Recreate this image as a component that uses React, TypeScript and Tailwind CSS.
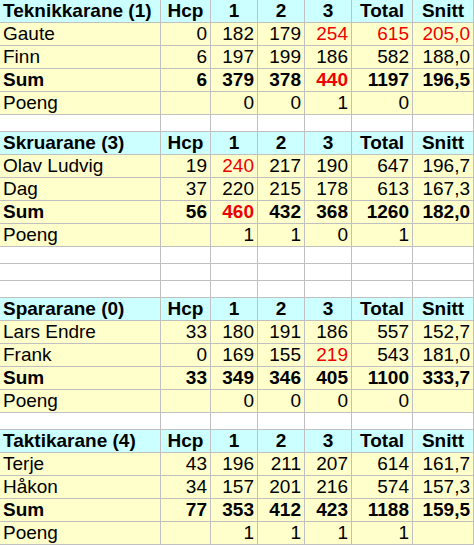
import React from "react";

type Cell = string | { v: string; red?: boolean };

type Section = {
  title: string;
  rows: { name: string; cells: Cell[]; bold?: boolean }[];
  gapAfter: number;
};

const r = (v: string) => ({ v, red: true });

const sections: Section[] = [
  {
    title: "Teknikkarane (1)",
    rows: [
      { name: "Gaute", cells: ["0", "182", "179", r("254"), r("615"), r("205,0")] },
      { name: "Finn", cells: ["6", "197", "199", "186", "582", "188,0"] },
      { name: "Sum", bold: true, cells: ["6", "379", "378", r("440"), "1197", "196,5"] },
      { name: "Poeng", cells: ["", "0", "0", "1", "0", ""] },
    ],
    gapAfter: 1,
  },
  {
    title: "Skruarane (3)",
    rows: [
      { name: "Olav Ludvig", cells: ["19", r("240"), "217", "190", "647", "196,7"] },
      { name: "Dag", cells: ["37", "220", "215", "178", "613", "167,3"] },
      { name: "Sum", bold: true, cells: ["56", r("460"), "432", "368", "1260", "182,0"] },
      { name: "Poeng", cells: ["", "1", "1", "0", "1", ""] },
    ],
    gapAfter: 3,
  },
  {
    title: "Spararane (0)",
    rows: [
      { name: "Lars Endre", cells: ["33", "180", "191", "186", "557", "152,7"] },
      { name: "Frank", cells: ["0", "169", "155", r("219"), "543", "181,0"] },
      { name: "Sum", bold: true, cells: ["33", "349", "346", "405", "1100", "333,7"] },
      { name: "Poeng", cells: ["", "0", "0", "0", "0", ""] },
    ],
    gapAfter: 1,
  },
  {
    title: "Taktikarane (4)",
    rows: [
      { name: "Terje", cells: ["43", "196", "211", "207", "614", "161,7"] },
      { name: "Håkon", cells: ["34", "157", "201", "216", "574", "157,3"] },
      { name: "Sum", bold: true, cells: ["77", "353", "412", "423", "1188", "159,5"] },
      { name: "Poeng", cells: ["", "1", "1", "1", "1", ""] },
    ],
    gapAfter: 0,
  },
];

const headers = ["Hcp", "1", "2", "3", "Total", "Snitt"];

const base =
  "border-r border-b border-[#c0c0c0] h-[23px] leading-[22px] px-[3px] whitespace-nowrap overflow-hidden";

export default function App() {
  const cells: React.ReactNode[] = [];
  sections.forEach((s, si) => {
    cells.push(
      <div key={`h${si}`} className={`${base} bg-[#ccffff] font-bold text-left`}>
        {s.title}
      </div>
    );
    headers.forEach((h, hi) =>
      cells.push(
        <div key={`h${si}-${hi}`} className={`${base} bg-[#ccffff] font-bold text-center`}>
          {h}
        </div>
      )
    );
    s.rows.forEach((row, ri) => {
      cells.push(
        <div
          key={`r${si}-${ri}`}
          className={`${base} bg-[#ffffcc] text-left ${row.bold ? "font-bold" : ""}`}
        >
          {row.name}
        </div>
      );
      row.cells.forEach((c, ci) => {
        const v = typeof c === "string" ? c : c.v;
        const red = typeof c !== "string" && c.red;
        cells.push(
          <div
            key={`r${si}-${ri}-${ci}`}
            className={`${base} bg-[#ffffcc] text-right ${row.bold ? "font-bold" : ""} ${
              red ? "text-[#ee0000]" : "text-black"
            }`}
          >
            {v}
          </div>
        );
      });
    });
    for (let g = 0; g < s.gapAfter; g++) {
      for (let ci = 0; ci < 7; ci++) {
        cells.push(
          <div
            key={`g${si}-${g}-${ci}`}
            className="border-r border-b border-[#c0c0c0] h-[17px] bg-white"
          />
        );
      }
    }
  });

  return (
    <div className="w-[474px] h-[545px] overflow-hidden bg-white">
      <div
        className="grid grid-cols-[161px_50px_47px_47px_47px_61px_61px] text-[19px] text-black"
        style={{ fontFamily: '"Liberation Sans", Arial, sans-serif' }}
      >
        {cells}
      </div>
    </div>
  );
}
